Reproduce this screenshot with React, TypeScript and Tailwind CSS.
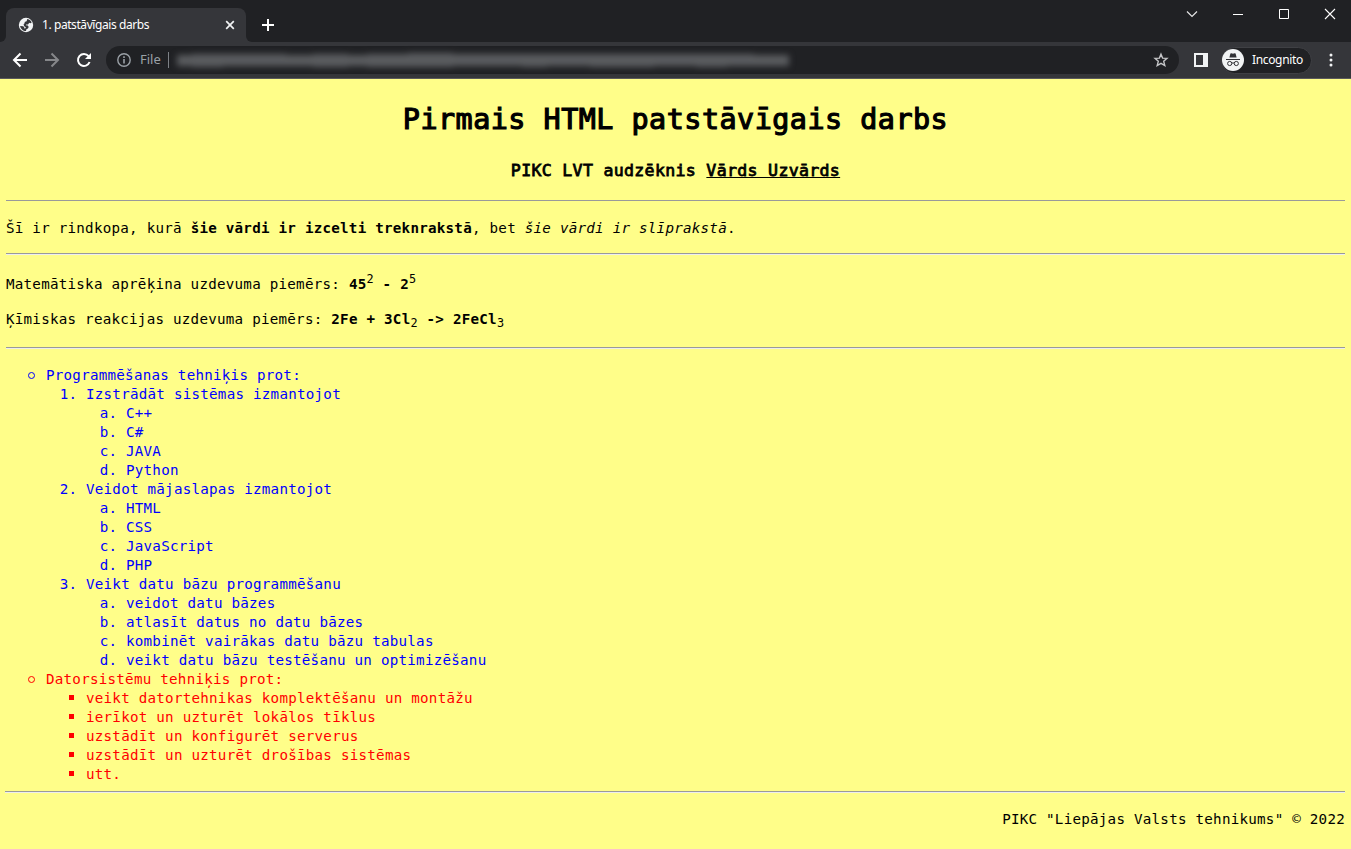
import React from 'react';

const urlBlocks = [
  [14, 11], [30, 13], [22, 12], [38, 12], [26, 11], [34, 13], [18, 11], [40, 13], [44, 14], [30, 12],
  [36, 12], [24, 13], [42, 12], [34, 13], [28, 13], [40, 12], [30, 13], [26, 12], [34, 11],
];

function TabStrip() {
  return (
    <div className="flex h-[42px] bg-[#202124]">
      <div className="flex w-[6px] items-end bg-[#35363a]">
        <div className="h-full w-full rounded-br-[6px] bg-[#202124]" />
      </div>
      <div className="flex w-[240px] bg-[#202124] pt-2">
        <div className="flex h-[34px] w-full items-center rounded-t-[8px] bg-[#35363a] pr-[11px] pl-[12px]">
          <svg width="16" height="16" viewBox="0 0 16 16" className="shrink-0">
            <circle cx="8" cy="8" r="7.2" fill="#f1f3f4" />
            <path d="M9.3 2.1C11.5 2.4 13 3.7 13.7 5.5L12.4 6.3 11.2 5.8 10 7.6 8.2 7.5 7.8 8.2 9.8 8.6 10.7 9.9 9.9 11.6 8.4 12.2 8 14C5 14 2.6 11.9 2.1 9L5.3 9.2 6.2 10.2 6.3 11.4 7.5 11.2 7.8 10.2 6.2 9.2 5.6 7.2 6.8 6.1 6.6 4.9 8.6 4.2Z" fill="#35363a" />
          </svg>
          <span className="ml-2 grow whitespace-nowrap font-['Noto_Sans',sans-serif] text-[12px] tracking-[-0.42px] text-white">1. patstāvīgais darbs</span>
          <svg width="10" height="10" viewBox="0 0 10 10" stroke="#f1f3f4" strokeWidth="1.7" className="shrink-0">
            <path d="M1.2 1.2 8.8 8.8M8.8 1.2 1.2 8.8" />
          </svg>
        </div>
      </div>
      <div className="flex w-[6px] bg-[#35363a]">
        <div className="h-full w-full rounded-bl-[6px] bg-[#202124]" />
      </div>
      <svg width="14" height="14" viewBox="0 0 14 14" stroke="#fff" strokeWidth="2" className="mt-[18px] ml-[9px]">
        <path d="M7 1V13M1 7H13" />
      </svg>
      <div className="ml-auto flex pt-[8px] pr-[15px]">
        <svg width="12" height="12" viewBox="0 0 12 12" fill="none" stroke="#e5e5e6" strokeWidth="1.2" className="mr-[34px]">
          <path d="M1 3.5 6 8.5 11 3.5" />
        </svg>
        <svg width="12" height="12" viewBox="0 0 12 12" stroke="#fff" className="mr-[34px]">
          <path d="M1 6.5H11" />
        </svg>
        <svg width="12" height="12" viewBox="0 0 12 12" fill="none" stroke="#fff" className="mr-[34px]">
          <path d="M1.5 1.5H10.5V10.5H1.5Z" />
        </svg>
        <svg width="12" height="12" viewBox="0 0 12 12" stroke="#fff" strokeWidth="1.1">
          <path d="M1 1 11 11M11 1 1 11" />
        </svg>
      </div>
    </div>
  );
}

function Toolbar() {
  return (
    <div className="flex h-[37px] items-center border-b border-[#5b5a5b] bg-[#35363a] pl-[12px] font-['Noto_Sans',sans-serif]">
      <svg width="16" height="16" viewBox="0 0 16 16" fill="none" stroke="#fff" strokeWidth="2" className="shrink-0">
        <path d="M15 8H2.5M8.5 1.5 2 8 8.5 14.5" />
      </svg>
      <svg width="16" height="16" viewBox="0 0 16 16" fill="none" stroke="#86878a" strokeWidth="2" className="ml-4 shrink-0">
        <path d="M1 8H13.5M7.5 1.5 14 8 7.5 14.5" />
      </svg>
      <svg width="16" height="16" viewBox="0 0 16 16" className="ml-4 shrink-0">
        <path d="M13.6 10A6 6 0 1 1 12.6 4.1" fill="none" stroke="#fff" strokeWidth="2" />
        <path d="M15 1V7H9Z" fill="#fff" />
      </svg>
      <div className="ml-[14px] flex h-7 w-[1073px] shrink-0 items-center rounded-full bg-[#202124] pr-[10px] pl-[11px]">
        <svg width="14" height="14" viewBox="0 0 14 14" fill="none" stroke="#9aa0a6" strokeWidth="1.4">
          <circle cx="7" cy="7" r="6.2" />
          <path d="M7 6V10.5M7 3.3V4.9" strokeWidth="1.6" />
        </svg>
        <span className="ml-[9px] w-[23px] text-[13px] text-[#9aa0a6]">File</span>
        <div className="ml-[5px] h-4 w-px bg-[#7d8186]" />
        <div className="ml-2 flex w-[612px] items-center blur-[3px]">
          {urlBlocks.map(([w, h], i) => (
            <span key={i} className="grow bg-[#5a5c5f]" style={{ width: w, height: h }} />
          ))}
        </div>
        <svg width="16" height="16" viewBox="0 0 16 16" fill="none" stroke="#c5c6c8" strokeWidth="1.4" className="ml-auto">
          <path d="M8 2.2 9.6 6.1 14 6.4 10.7 9.3 11.8 13.6 8 11.3 4.2 13.6 5.3 9.3 2 6.4 6.4 6.1Z" />
        </svg>
      </div>
      <svg width="14" height="14" viewBox="0 0 14 14" className="ml-[15px] shrink-0">
        <path fillRule="evenodd" d="M0 0H14V14H0ZM2 2V12H9V2Z" fill="#f1f3f4" />
      </svg>
      <div className="ml-[13px] flex h-[27px] w-[91px] shrink-0 items-center rounded-full border border-[#3f4044] bg-[#202124]">
        <svg width="22" height="22" viewBox="0 0 22 22" className="shrink-0">
          <circle cx="11" cy="11" r="11" fill="#f1f3f4" />
          <path d="M7.4 8.4 8.4 4.6 9.4 4.2 11 4.7 12.6 4.2 13.6 4.6 14.6 8.4Z" fill="#303136" />
          <path d="M4 10.5H18" stroke="#303136" strokeWidth="1" />
          <g fill="none" stroke="#303136" strokeWidth="1">
            <circle cx="7.7" cy="14.5" r="2.1" />
            <circle cx="14.3" cy="14.5" r="2.1" />
            <path d="M9.8 14.2Q11 13.5 12.2 14.2" />
          </g>
        </svg>
        <span className="ml-[8px] text-[12px] tracking-[-0.35px] text-white">Incognito</span>
      </div>
      <svg width="4" height="14" viewBox="0 0 4 14" fill="#f1f3f4" className="ml-[17px] shrink-0">
        <circle cx="2" cy="2" r="1.5" />
        <circle cx="2" cy="7" r="1.5" />
        <circle cx="2" cy="12" r="1.5" />
      </svg>
    </div>
  );
}

function Rule({ className = '' }: { className?: string }) {
  return <hr className={`h-[2px] border-0 border-t border-[#9a9a9a] bg-[#eeeeee] ${className}`} />;
}

function CircleMarker() {
  return <span className="absolute top-[6px] -left-[18px] h-[7px] w-[7px] rounded-full border border-current" />;
}

function SquareMarker() {
  return <span className="absolute top-[6px] -left-[17px] h-[5px] w-[5px] bg-current" />;
}

const skills = [
  { title: 'Izstrādāt sistēmas izmantojot', items: ['C++', 'C#', 'JAVA', 'Python'] },
  { title: 'Veidot mājaslapas izmantojot', items: ['HTML', 'CSS', 'JavaScript', 'PHP'] },
  {
    title: 'Veikt datu bāzu programmēšanu',
    items: ['veidot datu bāzes', 'atlasīt datus no datu bāzes', 'kombinēt vairākas datu bāzu tabulas', 'veikt datu bāzu testēšanu un optimizēšanu'],
  },
];

const systemSkills = [
  'veikt datortehnikas komplektēšanu un montāžu',
  'ierīkot un uzturēt lokālos tīklus',
  'uzstādīt un konfigurēt serverus',
  'uzstādīt un uzturēt drošības sistēmas',
  'utt.',
];

export default function App() {
  return (
    <div className="flex h-[849px] w-[1351px] flex-col overflow-hidden">
      <TabStrip />
      <Toolbar />
      <main className="grow bg-[#fffe89] px-[6px] pt-[22px] font-['DejaVu_Sans_Mono',monospace] text-[14.2px] leading-[19px] tracking-[0.25px] text-black">
        <h1 className="text-center text-[28.4px] leading-[38px] font-normal tracking-[0.5px] [-webkit-text-stroke:1.2px_#000]">Pirmais HTML patstāvīgais darbs</h1>
        <h3 className="mt-[21px] text-center text-[16.6px] leading-[22px] font-normal tracking-[0.3px] [-webkit-text-stroke:0.8px_#000]">
          PIKC LVT audzēknis <span className="underline">Vārds Uzvārds</span>
        </h3>
        <hr className="mt-[18px] h-px border-0 bg-[#9a9a9a]" />
        <p className="mt-[18px]">
          Šī ir rindkopa, kurā <b>šie vārdi ir izcelti treknrakstā</b>, bet <i>šie vārdi ir slīprakstā</i>.
        </p>
        <Rule className="mt-[15px]" />
        <p className="mt-[20px]">
          Matemātiska aprēķina uzdevuma piemērs: <b>45</b><sup className="text-[11.85px] tracking-[0.2px]">2</sup> <b>- 2</b><sup className="text-[11.85px] tracking-[0.2px]">5</sup>
        </p>
        <p className="mt-[16px]">
          Ķīmiskas reakcijas uzdevuma piemērs: <b>2Fe + 3Cl</b><sub className="text-[11.85px] tracking-[0.2px]">2</sub> <b>-&gt; 2FeCl</b><sub className="text-[11.85px] tracking-[0.2px]">3</sub>
        </p>
        <Rule className="mt-[18px]" />
        <ul className="mt-[17px] pl-10">
          <li className="relative text-[#0000ff]">
            <CircleMarker />
            Programmēšanas tehniķis prot:
            <ol className="list-decimal pl-10">
              {skills.map((s) => (
                <li key={s.title}>
                  {s.title}
                  <ol className="list-[lower-alpha] pl-10">
                    {s.items.map((t) => <li key={t}>{t}</li>)}
                  </ol>
                </li>
              ))}
            </ol>
          </li>
          <li className="relative text-[#ff0000]">
            <CircleMarker />
            Datorsistēmu tehniķis prot:
            <ul className="pl-10">
              {systemSkills.map((t) => <li key={t} className="relative"><SquareMarker />{t}</li>)}
            </ul>
          </li>
        </ul>
        <Rule className="mt-[7px] -ml-px" />
        <footer className="mt-[17px] text-right">PIKC "Liepājas Valsts tehnikums" © 2022</footer>
      </main>
    </div>
  );
}
